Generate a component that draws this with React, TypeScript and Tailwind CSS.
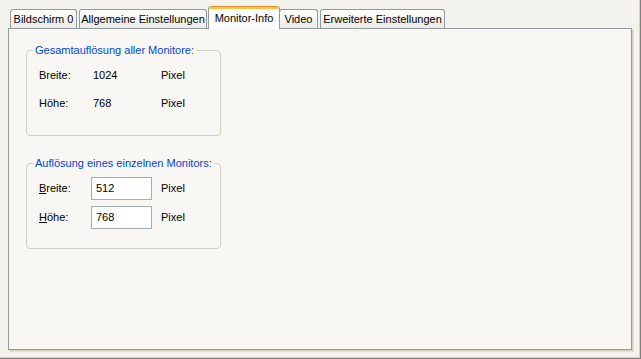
import React from "react"

type Tab = { label: string; width: string; active?: boolean }

const tabs: Tab[] = [
  { label: "Bildschirm 0", width: "w-[67px]" },
  { label: "Allgemeine Einstellungen", width: "w-[128px]" },
  { label: "Monitor-Info", width: "w-[72px]", active: true },
  { label: "Video", width: "w-[39px]" },
  { label: "Erweiterte Einstellungen", width: "w-[125px]" },
]

function TabButton(props: { tab: Tab }) {
  const { tab } = props
  if (tab.active) {
    return (
      <div
        className={`${tab.width} relative z-10 -mx-[1px] -mb-[1px] flex h-[23px] flex-col overflow-hidden rounded-t-[3px] border-x border-[#919b9c] bg-[#fcfcfe]`}
      >
        <div className="h-[1px] bg-[#e68b2c]" />
        <div className="h-[2px] bg-[#ffc73c]" />
        <div className="flex flex-1 items-start justify-center pt-[1px]">{tab.label}</div>
      </div>
    )
  }
  return (
    <div
      className={`${tab.width} mr-[2px] flex h-[19px] items-center justify-center rounded-t-[3px] border-x border-t border-[#919b9c] bg-gradient-to-b from-white to-[#ecebe5]`}
    >
      {tab.label}
    </div>
  )
}

function Group(props: { title: string; children: React.ReactNode; className?: string }) {
  return (
    <fieldset className={`w-[195px] rounded-[4px] border border-[#d0d0bf] ${props.className ?? ""}`}>
      <legend className="ml-[6px] whitespace-nowrap px-[2px] leading-[13px] text-[#0046d5]">
        {props.title}
      </legend>
      <div className="pl-[12px]">{props.children}</div>
    </fieldset>
  )
}

export default function App() {
  return (
    <div
      className="h-[359px] w-[641px] bg-[#f3f2ed] pl-[8px] pt-[6px] text-[11px] text-black shadow-[inset_-1px_-1px_0_#808080,inset_-2px_-2px_0_#d4d0c8]"
      style={{ fontFamily: '"Liberation Sans", Arial, sans-serif' }}
    >
      {/* tab strip */}
      <div className="flex h-[22px] items-end pl-[2px]">
        {tabs.map((tab, idx) => (
          <TabButton tab={tab} key={idx} />
        ))}
      </div>

      {/* tab pane */}
      <div className="h-[322px] w-[624px] border border-[#919b9c] bg-[#f8f7f4] pl-[17px] pt-[15px] shadow-[1px_1px_0_#d0cebf,2px_2px_0_#e3e1d6]">
        <Group title="Gesamtauflösung aller Monitore:" className="pb-[22px] pt-[8px]">
          <div className="flex flex-col gap-[8px]">
            <div className="flex h-[20px] items-center">
              <span className="w-[54px]">Breite:</span>
              <span className="w-[68px]">1024</span>
              <span>Pixel</span>
            </div>
            <div className="flex h-[20px] items-center">
              <span className="w-[54px]">Höhe:</span>
              <span className="w-[68px]">768</span>
              <span>Pixel</span>
            </div>
          </div>
        </Group>

        <Group title="Auflösung eines einzelnen Monitors:" className="mt-[21px] pb-[19px] pt-[7px]">
          <div className="flex flex-col gap-[6px]">
            <div className="flex h-[23px] items-center">
              <span className="w-[52px]">
                <span className="underline">B</span>reite:
              </span>
              <div className="flex h-[23px] w-[61px] items-start border border-[#a5acb2] bg-white pl-[4px] pt-[2px]">
                512
              </div>
              <span className="ml-[9px]">Pixel</span>
            </div>
            <div className="flex h-[23px] items-center">
              <span className="w-[52px]">
                <span className="underline">H</span>öhe:
              </span>
              <div className="flex h-[23px] w-[61px] items-start border border-[#a5acb2] bg-white pl-[4px] pt-[2px]">
                768
              </div>
              <span className="ml-[9px]">Pixel</span>
            </div>
          </div>
        </Group>
      </div>
    </div>
  )
}
